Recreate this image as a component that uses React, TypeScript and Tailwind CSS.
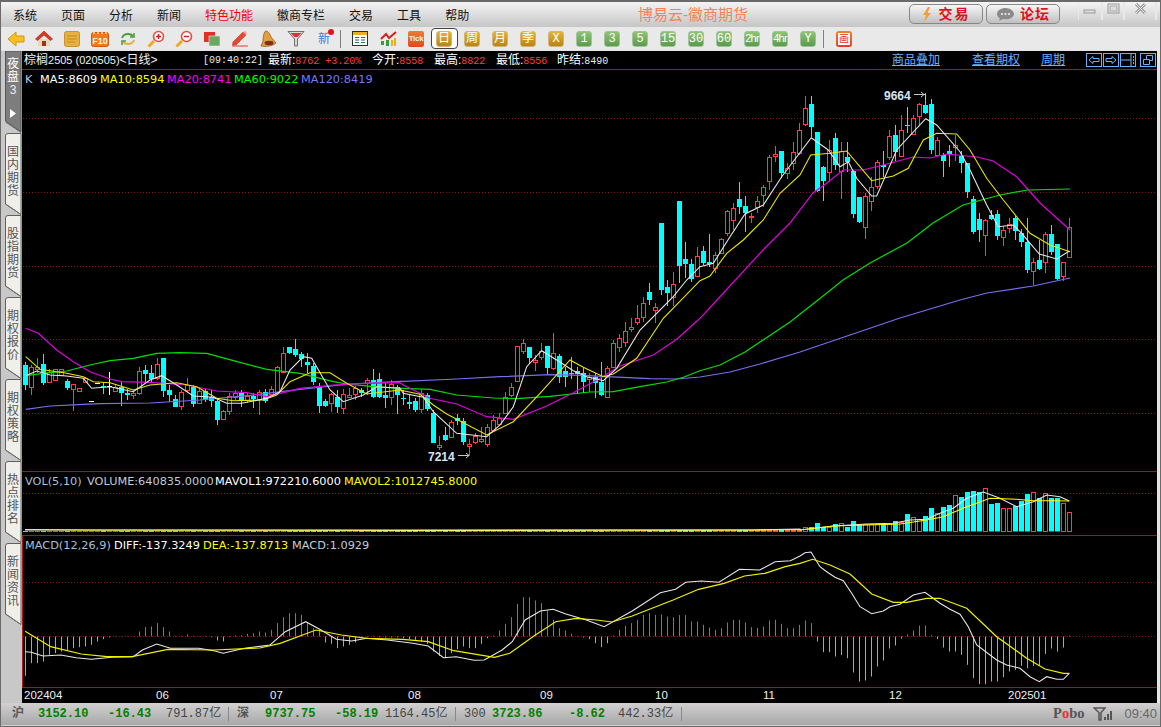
import React from "react";

type Row = [number, number, number, number, string];

const X = (i: number) => 25.5 + 6 * i;
const pts = (x0: number, y0: number, sx: number, arr: number[][]) =>
  arr.map(([x, y]) => [x0 + x / sx, y0 + y / 3]);
const str = (arr: number[][]) => arr.map(([x, y]) => `${x.toFixed(1)},${y.toFixed(1)}`).join(" ");

// candles read off the chart: body top, body bottom, wick top, wick bottom, kind
const rowsA: Row[] = [
  [165, 225, 155, 240, "c"], [172, 230, 165, 255, "r"], [170, 176, 145, 190, "r"], [162, 220, 132, 225, "c"],
  [185, 215, 178, 218, "r"], [178, 210, 178, 212, "r"], [178, 195, 178, 195, "r"], [212, 235, 208, 240, "c"],
  [222, 238, 222, 302, "r"], [234, 244, 234, 244, "r"], [203, 215, 200, 218, "r"], [272, 274, 272, 274, "w"],
  [218, 220, 218, 220, "w"], [228, 231, 215, 252, "c"], [229, 231, 185, 255, "w"], [232, 242, 225, 245, "r"],
  [232, 248, 215, 288, "c"], [248, 254, 238, 270, "c"], [250, 255, 240, 268, "r"], [183, 250, 170, 255, "r"],
  [180, 192, 165, 220, "c"], [190, 207, 165, 215, "c"], [162, 205, 143, 210, "r"], [144, 243, 144, 260, "c"],
  [240, 254, 225, 275, "c"], [268, 290, 255, 292, "c"], [247, 288, 240, 300, "r"], [225, 240, 205, 245, "r"],
  [232, 281, 225, 292, "c"], [244, 280, 232, 282, "r"], [244, 270, 238, 275, "c"], [262, 272, 240, 290, "c"],
  [272, 330, 265, 345, "c"], [304, 326, 300, 328, "r"], [257, 304, 250, 316, "r"], [250, 262, 240, 270, "r"],
  [250, 272, 240, 290, "c"], [258, 270, 250, 280, "r"], [258, 268, 250, 295, "c"], [245, 268, 240, 315, "r"],
  [245, 272, 238, 280, "c"], [238, 252, 228, 262, "r"], [172, 248, 168, 250, "r"], [130, 185, 110, 188, "r"],
  [112, 130, 110, 132, "c"], [117, 135, 88, 140, "c"], [132, 148, 125, 170, "c"], [156, 165, 128, 190, "c"],
  [168, 215, 160, 225, "c"], [232, 288, 220, 310, "c"], [274, 288, 268, 292, "c"], [253, 278, 248, 305, "r"],
  [262, 292, 240, 308, "c"], [253, 293, 238, 312, "r"], [256, 262, 235, 265, "r"], [235, 252, 228, 270, "r"],
  [240, 248, 235, 260, "c"], [210, 218, 205, 255, "r"], [210, 260, 178, 265, "c"], [208, 262, 190, 265, "c"],
  [255, 263, 218, 295, "c"], [222, 262, 210, 285, "r"], [230, 255, 225, 312, "c"],
];
const rowsB: Row[] = [
  [353, 358, 330, 375, "c"], [366, 371, 345, 388, "c"], [364, 390, 355, 395, "c"], [340, 388, 330, 400, "r"],
  [345, 388, 340, 392, "c"], [400, 488, 390, 490, "c"], [496, 502, 468, 510, "r"], [465, 480, 440, 482, "c"],
  [427, 470, 420, 472, "r"], [415, 423, 403, 435, "c"], [424, 485, 415, 495, "c"], [492, 497, 478, 528, "r"],
  [468, 485, 460, 492, "r"], [478, 482, 440, 488, "r"], [442, 492, 432, 500, "r"], [421, 450, 405, 452, "r"],
  [413, 433, 400, 435, "r"], [352, 400, 335, 402, "r"], [322, 345, 310, 350, "r"], [199, 302, 197, 305, "r"],
  [190, 212, 178, 222, "r"], [202, 233, 200, 252, "c"], [240, 246, 225, 272, "r"], [212, 232, 190, 240, "r"],
  [198, 265, 198, 282, "c"], [220, 265, 160, 270, "r"], [228, 292, 222, 310, "c"], [274, 292, 262, 320, "c"],
  [280, 283, 232, 298, "c"], [272, 282, 262, 340, "c"], [280, 305, 265, 340, "c"], [290, 298, 280, 335, "r"],
  [290, 310, 280, 355, "c"], [305, 345, 247, 348, "c"], [265, 350, 258, 350, "r"], [190, 262, 180, 265, "r"],
  [175, 202, 162, 215, "r"], [152, 185, 125, 200, "r"], [142, 148, 115, 155, "r"], [115, 125, 75, 135, "r"],
  [68, 112, 50, 125, "r"], [37, 60, 10, 75, "c"], [80, 90, 70, 128, "r"],
];
const rowsC: Row[] = [
  [99, 300, 99, 315, "c"], [291, 309, 270, 348, "c"], [283, 320, 247, 348, "r"], [33, 228, 33, 278, "c"],
  [207, 221, 156, 265, "c"], [222, 268, 208, 275, "c"], [199, 257, 170, 260, "r"],
];
const rowsD: Row[] = [
  [483, 518, 468, 525, "c"], [517, 521, 432, 530, "c"], [495, 533, 485, 550, "r"], [447, 490, 445, 492, "r"],
  [364, 428, 360, 438, "r"], [355, 390, 340, 420, "r"], [327, 350, 277, 372, "c"], [349, 370, 318, 425, "c"],
  [378, 382, 368, 398, "r"], [334, 352, 318, 370, "r"], [292, 314, 285, 350, "r"], [202, 272, 195, 300, "r"],
  [193, 197, 168, 215, "r"], [183, 248, 183, 265, "c"], [235, 250, 220, 268, "r"], [187, 220, 155, 240, "r"],
  [121, 190, 100, 195, "r"], [55, 101, 18, 108, "r"], [42, 110, 18, 140, "c"], [127, 302, 127, 305, "c"],
  [232, 272, 228, 332, "c"], [180, 245, 150, 272, "r"], [145, 225, 130, 240, "c"], [182, 243, 155, 328, "r"],
  [202, 217, 155, 245, "c"], [242, 372, 240, 385, "c"], [322, 396, 320, 400, "c"], [319, 412, 308, 448, "r"],
  [292, 334, 260, 362, "r"], [217, 288, 210, 298, "r"], [224, 230, 183, 260, "c"], [139, 202, 120, 210, "r"],
  [136, 185, 105, 212, "c"], [121, 199, 75, 200, "r"], [105, 107, 50, 128, "c"], [85, 132, 75, 135, "r"],
  [43, 77, 38, 105, "r"], [45, 68, 10, 72, "c"], [42, 180, 28, 192, "c"], [151, 195, 140, 198, "r"],
  [194, 212, 190, 262, "c"], [184, 192, 165, 232, "c"], [166, 171, 135, 212, "r"], [197, 218, 183, 250, "c"],
  [220, 305, 218, 325, "c"], [328, 427, 318, 432, "c"], [387, 420, 370, 455, "c"], [391, 436, 388, 497, "r"],
  [375, 387, 360, 390, "c"], [372, 437, 360, 450, "c"], [421, 440, 408, 467, "r"], [401, 415, 385, 430, "r"],
  [385, 422, 375, 450, "c"], [430, 455, 418, 470, "c"], [456, 540, 385, 548, "c"], [515, 542, 505, 585, "r"],
  [511, 538, 450, 540, "c"], [431, 515, 425, 548, "r"], [432, 485, 405, 495, "c"], [462, 568, 462, 570, "c"],
  [517, 557, 515, 572, "r"], [412, 502, 385, 505, "r"],
];
const conv = (y0: number, rows: Row[]): Row[] =>
  rows.map(([a, b, c, d, k]) => [
    Math.round(y0 + a / 3) + 0.5,
    Math.round(y0 + b / 3) + 0.5,
    Math.round(y0 + c / 3),
    Math.round(y0 + d / 3),
    k,
  ]);
const candles: Row[] = [...conv(310, rowsA), ...conv(280, rowsB), ...conv(190, rowsC), ...conv(90, rowsD)];

const COLOR: Record<string, string> = { r: "#ff3f3f", c: "#00ffff", w: "#ffffff" };

// moving averages in page coordinates
const ma120 = [
  ...pts(0, 310, 3, [[77, 298], [150, 288], [250, 283], [300, 281], [450, 279], [600, 270], [750, 256], [900, 238], [1050, 222], [1200, 214]]),
  ...pts(400, 280, 3, [[10, 304], [170, 297], [300, 290], [450, 284], [550, 286], [620, 290], [750, 296], [830, 297], [900, 291]]),
  [730, 372], [760, 364], [800, 352], [850, 335], [900, 318], [960, 300], [987, 293], [1033, 286], [1070, 278],
];
const ma60 = [
  ...pts(0, 310, 3, [[77, 197], [130, 190], [200, 183], [270, 165], [330, 152], [400, 145], [470, 130], [540, 128], [620, 130], [700, 152], [800, 178], [900, 190], [1000, 215], [1040, 222], [1120, 230], [1200, 235]]),
  ...pts(400, 280, 3, [[10, 325], [90, 328], [170, 345], [280, 354], [350, 356], [450, 349], [570, 336], [640, 335], [720, 320], [800, 306], [850, 292], [900, 272]]),
  [720, 365], [745, 352], [790, 322], [818, 300], [843, 280], [870, 263], [907, 243], [933, 223], [963, 205], [1000, 195], [1027, 190], [1070, 189],
];
const ma20 = [
  ...pts(0, 310, 3, [[77, 55], [115, 70], [170, 120], [220, 155], [270, 185], [330, 207], [365, 215], [450, 217], [560, 225], [650, 243], [740, 248], [800, 260], [850, 248], [900, 235], [1000, 225], [1100, 220], [1200, 218]]),
  ...pts(400, 280, 3, [[10, 315], [90, 355], [170, 372], [260, 410], [340, 418], [440, 378], [520, 338], [600, 295], [660, 258], [760, 225], [830, 178], [900, 115]]),
  [717, 300], [763, 250], [790, 223], [813, 193], [827, 183], [843, 170], [863, 170], [887, 164], [913, 157], [930, 158], [947, 154], [977, 157], [993, 161], [1017, 177], [1040, 203], [1070, 230],
];
const ma10 = [
  ...pts(0, 310, 3, [[77, 140], [120, 178], [200, 190], [250, 200], [280, 215], [330, 218], [400, 240], [450, 225], [530, 218], [590, 230], [650, 265], [700, 272], [790, 270], [830, 255], [870, 215], [930, 188], [990, 188], [1040, 220], [1100, 252], [1200, 240]]),
  ...pts(400, 280, 3, [[10, 332], [60, 343], [100, 375], [140, 402], [260, 465], [340, 425], [420, 340], [510, 240], [550, 262], [610, 290], [640, 282], [710, 235], [790, 115]]),
  ...pts(700, 90, 3, [[0, 572], [30, 558], [80, 490], [130, 450], [190, 390], [240, 310], [300, 255], [332, 195], [390, 190], [440, 183], [515, 272], [580, 258], [625, 235], [670, 150], [710, 130], [770, 132], [810, 180], [860, 265], [910, 330], [990, 430], [1050, 465], [1110, 485]]),
];
const ma5 = [
  ...pts(0, 310, 3, [[77, 197], [110, 183], [150, 195], [200, 198], [250, 205], [275, 235], [330, 230], [400, 245], [450, 210], [485, 197], [530, 225], [580, 258], [640, 262], [680, 280], [725, 280], [800, 265], [840, 245], [870, 180], [910, 140], [935, 145], [990, 240], [1030, 275], [1090, 255], [1130, 230], [1200, 235]]),
  ...pts(400, 280, 3, [[10, 340], [70, 352], [100, 395], [170, 460], [260, 470], [300, 435], [340, 380], [380, 260], [425, 212], [470, 240], [520, 272], [560, 290], [610, 302], [650, 265], [720, 150], [820, 50], [860, 0]]),
  ...pts(700, 90, 3, [[0, 530], [40, 520], [90, 440], [135, 372], [190, 345], [245, 260], [334, 143], [385, 180], [420, 230], [445, 215], [470, 265], [515, 318], [530, 318], [590, 180], [677, 86], [710, 105], [780, 185], [810, 240], [860, 345], [895, 410], [940, 405], [965, 430], [1018, 492], [1070, 507], [1108, 483]]),
];

// volume bar tops, index 130 up to the last bar
const volTops: [number, string][] = [
  [172, "r"], [172, "c"], [159, "c"], [170, "c"], [170, "r"], [162, "c"], [160, "r"], [170, "c"], [153, "c"], [162, "c"],
  [163, "r"], [163, "r"], [163, "r"], [162, "c"], [162, "r"], [153, "c"], [155, "r"], [132, "c"], [142, "r"], [146, "r"],
  [138, "c"], [114, "c"], [130, "r"], [112, "c"], [105, "c"], [76, "r"], [82, "c"], [67, "c"], [63, "c"], [67, "c"],
  [55, "r"], [102, "c"], [99, "c"], [115, "r"], [115, "r"], [108, "c"], [93, "c"], [72, "c"], [65, "r"], [85, "c"],
  [70, "r"], [85, "c"], [85, "c"], [100, "r"], [127, "r"],
];
const mavol1 = [[25, 530], [400, 530.5], [750, 530], [800, 529], ...pts(800, 470, 3, [[0, 180], [100, 168], [200, 162], [280, 160], [330, 150], [380, 148], [420, 130], [460, 115], [500, 85], [550, 66], [600, 85], [650, 110], [700, 95], [740, 75], [780, 80], [808, 93]])];
const mavol2 = [[25, 529.5], [90, 530], [400, 530], [750, 530], [800, 529.5], ...pts(800, 470, 3, [[0, 180], [100, 168], [300, 162], [380, 150], [430, 140], [500, 110], [570, 85], [650, 88], [700, 92], [760, 92], [808, 93]])];

const hist = [
  -118, -80, -80, -75, -55, -50, -45, -40, -35, -32, -30, -25, -15, -8, -3, -1, -1, -1, 1, 15, 28, 30, 40, 28, 15, 2, 2, 6, 2, -1,
  -1, -2, -12, -15, -2, 3, 4, 8, 10, 15, 12, 20, 40, 58, 70, 70, 65, 40, 25, 18, -18, -22, -35, -30, -25, -18, -5, -2, 2, -2,
  -3, -3, -3, -5, -8, -10, -16, -22, -45, -58, -65, -50, -38, -30, -35, -35, -22, -5, 3, 18, 38, 58, 98, 118, 118, 108, 100, 78, 50, 25,
  18, 8, 2, -3, -8, -20, -32, -20, 3, 20, 32, 40, 50, 65, 70, 65, 66, 60, 58, 64, 64, 45, 45, 35, 27, 20, 25, 42, 50, 50,
  42, 28, 26, 30, 48, 50, 38, 25, 25, 35, 48, 40, -15, -47, -47, -60, -56, -65, -108, -135, -132, -120, -90, -72, -36, -27, -6, 6, 18, 33,
  33, 4, -8, -33, -45, -45, -55, -85, -125, -143, -143, -135, -135, -122, -105, -100, -88, -95, -88, -88, -52, -36, -45, -33, 3,
];
const diff = [
  ...pts(20, 540, 1.96, [[10, 335], [22, 337], [45, 348], [80, 345], [110, 353], [140, 358], [180, 352], [222, 350], [240, 330], [268, 312], [295, 325], [350, 325], [380, 332], [398, 340], [440, 325], [490, 315], [520, 275], [560, 245], [590, 270], [620, 298], [650, 303], [680, 295], [720, 300], [770, 310], [800, 318], [830, 353], [855, 350], [890, 361], [910, 360], [945, 330], [965, 305], [990, 240], [1020, 213], [1045, 208], [1070, 222], [1110, 240], [1145, 260], [1200, 213], [1255, 158], [1285, 148], [1305, 127], [1335, 123], [1370, 127], [1410, 88], [1450, 90], [1480, 65], [1510, 62]]),
  ...pts(800, 470, 3, [[0, 258], [15, 248], [33, 246], [60, 290], [80, 305], [105, 322], [130, 332], [155, 370], [180, 410], [215, 431], [250, 423], [270, 410], [300, 403], [340, 375], [375, 367], [420, 400], [450, 418], [480, 433], [505, 470], [530, 525], [590, 570], [620, 585], [660, 595], [690, 620], [718, 635], [740, 620], [770, 628], [790, 628], [808, 610]]),
];
const dea = [
  ...pts(20, 540, 1.96, [[10, 274], [60, 320], [120, 342], [170, 350], [220, 350], [290, 328], [380, 330], [470, 324], [510, 310], [580, 270], [630, 285], [680, 295], [750, 298], [800, 305], [850, 332], [930, 352], [960, 340], [1010, 285], [1050, 245], [1090, 235], [1130, 240], [1160, 246], [1200, 228], [1280, 180], [1330, 148], [1380, 130], [1420, 108], [1460, 100], [1500, 80]]),
  ...pts(800, 470, 3, [[0, 280], [38, 268], [90, 285], [150, 312], [215, 372], [280, 397], [320, 397], [380, 385], [420, 385], [500, 415], [590, 500], [680, 565], [735, 597], [790, 610], [808, 610]]),
];

const GridLine = ({ y }: { y: number }) => (
  <line x1="23" x2="1157" y1={y} y2={y} stroke="#8a1212" strokeDasharray="1 2" />
);

function MainChart() {
  return (
    <svg className="absolute inset-0 h-full w-full" viewBox="22 70 1135 401">
      {[118.5, 192.5, 266.5, 339.5, 413.5].map((y) => (
        <GridLine key={y} y={y} />
      ))}
      {candles.map(([t, b, wt, wb, k], i) => {
        const x = X(i);
        return (
          <g key={i} stroke={COLOR[k]} fill={k === "r" ? "#000" : COLOR[k]}>
            <line x1={x} x2={x} y1={wt} y2={wb} />
            {k === "r" ? (
              <rect x={x - 2} y={t} width={4} height={Math.max(b - t, 1)} />
            ) : (
              <rect x={x - 2.5} y={t - 0.5} width={5} height={Math.max(b - t, 1)} stroke="none" />
            )}
          </g>
        );
      })}
      <polyline points={str(ma120)} fill="none" stroke="#7a6df0" strokeWidth="1.2" />
      <polyline points={str(ma60)} fill="none" stroke="#00e000" strokeWidth="1.2" />
      <polyline points={str(ma20)} fill="none" stroke="#e000e0" strokeWidth="1.2" />
      <polyline points={str(ma10)} fill="none" stroke="#e8e800" strokeWidth="1.1" />
      <polyline points={str(ma5)} fill="none" stroke="#e8e8e8" strokeWidth="1.1" />
      <path d="M914 94.5H925.5V99M921 92l3 2.5-3 2.5" fill="none" stroke="#c8c8c8" />
      <path d="M458 455.5H469M466 453l3 2.5-3 2.5" fill="none" stroke="#c8c8c8" />
    </svg>
  );
}

function VolChart() {
  return (
    <svg className="absolute inset-0 h-full w-full" viewBox="22 472 1135 63">
      <GridLine y={493.5} />
      {candles.map((c, i) => {
        const x = X(i);
        if (i < 130) {
          const h = i > 124 ? 3 : i > 100 ? 2 : 1;
          return <rect key={i} x={x - 2.5} y={532 - h} width={5} height={h} fill={COLOR[c[4] === "w" ? "r" : c[4]]} />;
        }
        const [top, k] = volTops[i - 130];
        const y = Math.round(470 + top / 3) + 0.5;
        return k === "r" ? (
          <rect key={i} x={x - 2} y={y} width={4} height={531.5 - y} fill="#000" stroke={COLOR.r} />
        ) : (
          <rect key={i} x={x - 2.5} y={y - 0.5} width={5} height={532 - y} fill={COLOR.c} />
        );
      })}
      <polyline points={str(mavol1)} fill="none" stroke="#e8e8e8" strokeWidth="1.1" />
      <polyline points={str(mavol2)} fill="none" stroke="#ffff00" strokeWidth="1.1" />
    </svg>
  );
}

function MacdChart() {
  return (
    <svg className="absolute inset-0 h-full w-full" viewBox="22 536 1135 151">
      <line x1="22.5" x2="22.5" y1="536" y2="687" stroke="#b01818" />
      <GridLine y={582.5} />
      <GridLine y={636.5} />
      {hist.map((v, i) => (
        <line
          key={i}
          x1={X(i)}
          x2={X(i)}
          y1={636.5}
          y2={636.5 - v / 3}
          stroke={v > 0 ? "#ff4040" : "#20e0f0"}
        />
      ))}
      <polyline points={str(diff)} fill="none" stroke="#e8e8e8" strokeWidth="1.1" />
      <polyline points={str(dea)} fill="none" stroke="#f0f000" strokeWidth="1.2" />
    </svg>
  );
}

function Legend({ items, tall }: { items: [string, string, string][]; tall?: boolean }) {
  return (
    <div
      className={`relative flex items-center pl-[3px] text-[11.3px] font-['DejaVu_Sans',sans-serif] whitespace-nowrap ${
        tall ? "h-[21px]" : "h-[20px]"
      }`}
    >
      {items.map(([t, w, c]) => (
        <span key={t} className={`${w} ${c}`}>
          {t}
        </span>
      ))}
    </div>
  );
}

const AXIS: [string, number][] = [
  ["202404", 2], ["06", 134], ["07", 248], ["08", 386], ["09", 518], ["10", 633], ["11", 741], ["12", 867], ["202501", 986],
];

// small toolbar pictures
function Slot({ children }: { children: React.ReactNode }) {
  return <div className="flex h-full w-[28px] shrink-0 items-center justify-center">{children}</div>;
}

function PeriodBtn({ label, tone, tight }: { label: string; tone: "gold" | "green"; tight?: boolean }) {
  return (
    <div
      className={`flex h-[16px] w-[16px] items-center justify-center rounded-[3px] border font-['Liberation_Mono','Noto_Sans_CJK_SC',monospace] text-white ${
        tone === "gold"
          ? "border-[#d0b478] bg-gradient-to-b from-[#e4b434] to-[#b88414]"
          : "border-[#a4c09c] bg-gradient-to-b from-[#8cc474] to-[#5a9c4c]"
      } ${tight ? "font-['Liberation_Sans'] text-[11px] tracking-[-0.8px]" : "text-[12px]"}`}
    >
      {label}
    </div>
  );
}

const Icons = {
  back: (
    <svg width="18" height="16" viewBox="0 0 18 16">
      <path d="M1 8 9 1v4h8v6H9v4z" fill="#f5c020" stroke="#d09a10" />
    </svg>
  ),
  home: (
    <svg width="18" height="17" viewBox="0 0 18 17">
      <path d="M3 9v7h12V9z" fill="#e8d8b8" />
      <path d="M7 11h4v5H7z" fill="#a83018" />
      <path d="M9 1 0.5 9l2 1.5L9 5l6.5 5.5 2-1.5z" fill="#d83820" stroke="#a02010" strokeWidth=".6" />
    </svg>
  ),
  note: (
    <svg width="16" height="16" viewBox="0 0 16 16">
      <rect x=".5" y=".5" width="15" height="15" rx="2" fill="#e8b040" stroke="#c89030" />
      <path d="M3 5h10M3 8h10M3 11h8" stroke="#c88c20" />
    </svg>
  ),
  f10: (
    <svg width="18" height="16" viewBox="0 0 18 16">
      <rect x=".5" y="1.5" width="17" height="14" rx="2" fill="#f07820" stroke="#d05810" />
      <path d="M3 1v2M7 1v2M11 1v2M15 1v2" stroke="#f8e0b0" strokeWidth="1.5" />
      <text x="9" y="13" textAnchor="middle" fontSize="9" fontWeight="700" fill="#fff8e0" fontFamily="Liberation Sans">F10</text>
    </svg>
  ),
  refresh: (
    <svg width="16" height="14" viewBox="0 0 16 14" fill="none" stroke="#4c9a3a" strokeWidth="2">
      <path d="M2 6c1-3 3-4 6-4 2 0 4 1 5 2" />
      <path d="M14 8c-1 3-3 4-6 4-2 0-4-1-5-2" stroke="#e0b040" />
      <path d="M14 1v4h-4M2 13V9h4" strokeWidth="1.5" />
    </svg>
  ),
  zoomIn: (
    <svg width="18" height="18" viewBox="0 0 18 18">
      <path d="M7 11 1.5 16.5" stroke="#f0a820" strokeWidth="3" />
      <circle cx="11.5" cy="6.5" r="5" fill="#fff" stroke="#e05040" strokeWidth="1.6" />
      <path d="M9 6.5h5M11.5 4v5" stroke="#d02020" strokeWidth="1.5" />
    </svg>
  ),
  zoomOut: (
    <svg width="18" height="18" viewBox="0 0 18 18">
      <path d="M7 11 1.5 16.5" stroke="#f0a820" strokeWidth="3" />
      <circle cx="11.5" cy="6.5" r="5" fill="#fff" stroke="#e05040" strokeWidth="1.6" />
      <path d="M9 6.5h5" stroke="#d02020" strokeWidth="1.5" />
    </svg>
  ),
  squares: (
    <svg width="18" height="16" viewBox="0 0 18 16">
      <rect x="1" y="1" width="11" height="10" fill="#e03028" />
      <rect x="6" y="5" width="11" height="10" fill="#6aa860" stroke="#e8e8e8" strokeWidth=".6" />
    </svg>
  ),
  pencil: (
    <svg width="18" height="17" viewBox="0 0 18 17">
      <path d="M2 12 12 2l3 3L5 15H1.5z" fill="#e84830" stroke="#c83020" strokeWidth=".6" />
      <path d="M12 2l3 3 1-2-2-2z" fill="#f0a090" />
      <path d="M1 16h16" stroke="#d84028" />
    </svg>
  ),
  bell: (
    <svg width="17" height="18" viewBox="0 0 17 18">
      <path d="M6 1c2 0 4 3 5 6l5 6c-3 3-10 4-15 3l2-5c0-4 1-10 3-10z" fill="#e0a040" stroke="#8a4a18" strokeWidth=".7" />
      <ellipse cx="9" cy="13" rx="4.5" ry="2.2" fill="#803018" />
    </svg>
  ),
  funnel: (
    <svg width="18" height="17" viewBox="0 0 18 17">
      <path d="M1 1.5h16L10.5 9v7h-3V9z" fill="#d8d8d8" stroke="#707070" />
      <path d="M3.5 3h11l-4 4h-3z" fill="#e03038" />
    </svg>
  ),
  table: (
    <svg width="16" height="15" viewBox="0 0 16 15">
      <rect x=".5" y=".5" width="15" height="14" fill="#fff" stroke="#303030" />
      <path d="M1 2.5h14" stroke="#e8b020" strokeWidth="3" />
      <path d="M3 6.5h4M9 6.5h4" stroke="#e02020" />
      <path d="M3 9h4M9 9h4" stroke="#2050c0" />
      <path d="M3 11.5h4M9 11.5h4" stroke="#208030" />
    </svg>
  ),
  chart: (
    <svg width="17" height="16" viewBox="0 0 17 16">
      <path d="M1 14h3V10H1zM6 15h3V9H6z" fill="#3a9a40" />
      <path d="M11 15h2V9h-2zM14 15h2V7h-2z" fill="#e8b020" />
      <path d="M1 8 6 3l3 4 7-6" fill="none" stroke="#d82020" strokeWidth="2" />
    </svg>
  ),
};

const TABS: { label: string; active?: boolean }[] = [
  { label: "夜盘", active: true },
  { label: "国内期货" },
  { label: "股指期货" },
  { label: "期权报价" },
  { label: "期权策略" },
  { label: "热点排名" },
  { label: "新闻资讯" },
];

function SideTab({ label, active }: { label: string; active?: boolean }) {
  return (
    <div className="relative h-[82px] w-[21px] shrink-0">
      <svg className="absolute inset-0" width="21" height="82" viewBox="0 0 21 82">
        {active ? (
          <path d="M4.5 0V70L20 81V0z" fill="#7d7d7d" stroke="#555" />
        ) : (
          <path d="M20 0.5H7Q4.5 0.5 4.5 3V71L20 81.5V0.5z" fill="#f0efe9" stroke="#606060" />
        )}
        <path d="M4.500 71 20 81.5" stroke="#707070" fill="none" />
      </svg>
      <div
        className={`relative flex flex-col items-center gap-[1px] pl-[3px] text-[12px] leading-[12px] ${
          active ? "pt-[7px] text-white" : "pt-[13px] text-[#555]"
        }`}
      >
        {label.split("").map((ch, i) => (
          <span key={i}>{ch}</span>
        ))}
        {active && <span className="text-[12px] leading-[12px] text-[#eee]">3</span>}
        {active && (
          <svg className="mt-[12px]" width="6" height="9" viewBox="0 0 6 9">
            <path d="M0 0 6 4.5 0 9z" fill="#fff" />
          </svg>
        )}
      </div>
    </div>
  );
}

const MENU = ["系统", "页面", "分析", "新闻", "特色功能", "徽商专栏", "交易", "工具", "帮助"];

export default function App() {
  return (
    <div className="flex h-[727px] w-[1161px] flex-col overflow-hidden border border-t-2 border-[#6a6a6a] bg-[#cfcfcf] font-['Liberation_Sans','Noto_Sans_CJK_SC',sans-serif] text-[12px] text-black">
      {/* title bar with menu */}
      <div className="relative flex h-[25px] shrink-0 items-center bg-gradient-to-b from-[#f4f4f4] to-[#c6c6c6] pl-[12px] pr-[2px]">
        <div className="flex gap-[24px] pt-[2px] text-[12px]">
          {MENU.map((m) => (
            <span key={m} className={m === "特色功能" ? "text-[#f00000]" : "text-[#111]"}>
              {m}
            </span>
          ))}
        </div>
        <span className="absolute left-[637px] top-[4px] text-[15px] leading-[18px] text-[#f4825a]">博易云-徽商期货</span>
        <div className="ml-auto flex h-full items-start">
          <div className="mt-[2px] flex h-[20px] w-[74px] items-center justify-center gap-[7px] rounded-[5px] border border-[#888] bg-gradient-to-b from-[#f6f6f6] to-[#c0c0c0] text-[14px] font-bold text-[#e01020]">
            <svg width="10" height="15" viewBox="0 0 10 15">
              <path d="M6 0 1 8h3l-2 7 7-9H5.5L8 0z" fill="#f0a030" />
            </svg>
            <span className="tracking-[2px]">交易</span>
          </div>
          <div className="ml-[3px] mt-[2px] flex h-[20px] w-[74px] items-center justify-center gap-[5px] rounded-[5px] border border-[#888] bg-gradient-to-b from-[#f6f6f6] to-[#c0c0c0] text-[14px] font-bold text-[#e01020]">
            <svg width="19" height="15" viewBox="0 0 19 15">
              <path d="M9.5 1C5 1 1 3.5 1 7c0 2 1.5 3.5 3 4.5L3 14l4-2c1 .3 1.7.3 2.5.3C14 12.3 18 10 18 7s-4-6-8.5-6z" fill="#8a8a8a" />
              <circle cx="6" cy="7" r="1.1" fill="#eee" />
              <circle cx="9.5" cy="7" r="1.1" fill="#eee" />
              <circle cx="13" cy="7" r="1.1" fill="#eee" />
            </svg>
            <span className="tracking-[1px]">论坛</span>
          </div>
          <div className="ml-[18px] flex h-full w-[80px] items-start">
            <svg width="80" height="22" viewBox="0 0 80 22" fill="none">
              <path d="M0 0v18M24 0v18M46 0v18M78 0v18" stroke="#e8e8e8" strokeWidth="2" />
              <rect x="6" y="8" width="11" height="3" fill="#dcdcdc" stroke="#999" />
              <rect x="30" y="2" width="11" height="9" stroke="#999" />
              <rect x="32" y="4" width="7" height="5" fill="#dcdcdc" stroke="#aaa" />
              <path d="M58 2l9 9M67 2l-9 9" stroke="#9a9a9a" strokeWidth="3" />
              <path d="M58 2l9 9M67 2l-9 9" stroke="#e8e8e8" />
            </svg>
          </div>
        </div>
      </div>

      {/* toolbar */}
      <div className="flex h-[23px] shrink-0 items-center bg-[#e9e9e9] pl-[1px]">
        <Slot>{Icons.back}</Slot>
        <Slot>{Icons.home}</Slot>
        <Slot>{Icons.note}</Slot>
        <Slot>{Icons.f10}</Slot>
        <Slot>{Icons.refresh}</Slot>
        <Slot>{Icons.zoomIn}</Slot>
        <Slot>{Icons.zoomOut}</Slot>
        <Slot>{Icons.squares}</Slot>
        <Slot>{Icons.pencil}</Slot>
        <Slot>{Icons.bell}</Slot>
        <Slot>{Icons.funnel}</Slot>
        <Slot>
          <div className="relative text-[12px] text-[#3a80d8]">
            新
            <span className="absolute -right-[4px] top-[-1px] h-[6px] w-[6px] rounded-full bg-[#e81010]" />
          </div>
        </Slot>
        <div className="ml-[2px] h-[18px] w-[1px] shrink-0 bg-[#808080]" />
        <div className="w-[5px] shrink-0" />
        <Slot>{Icons.table}</Slot>
        <Slot>{Icons.chart}</Slot>
        <Slot>
          <div className="flex h-[16px] w-[16px] items-center justify-center rounded-[2px] bg-gradient-to-b from-[#f07838] to-[#e04820] text-[8px] font-bold tracking-[-0.3px] text-[#fff0e0]">
            Tick
          </div>
        </Slot>
        <Slot>
          <div className="flex h-[21px] w-[27px] items-center justify-center rounded-[4px] border border-[#444] bg-white">
            <PeriodBtn label="日" tone="gold" />
          </div>
        </Slot>
        {["周", "月", "季", "X"].map((t) => (
          <Slot key={t}>
            <PeriodBtn label={t} tone="gold" />
          </Slot>
        ))}
        {["1", "3", "5", "15", "30", "60"].map((t) => (
          <Slot key={t}>
            <PeriodBtn label={t} tone="green" />
          </Slot>
        ))}
        <Slot>
          <PeriodBtn label="2hr" tone="green" tight />
        </Slot>
        <Slot>
          <PeriodBtn label="4hr" tone="green" tight />
        </Slot>
        <Slot>
          <PeriodBtn label="Y" tone="green" />
        </Slot>
        <div className="ml-[1px] h-[18px] w-[1px] shrink-0 bg-[#808080]" />
        <div className="w-[6px] shrink-0" />
        <Slot>
          <div className="flex h-[16px] w-[16px] items-center justify-center rounded-[3px] bg-gradient-to-b from-[#f08030] to-[#e83820] p-[2px]">
            <div className="flex h-full w-full items-center justify-center bg-white text-[10px] leading-none text-[#e03010]">画</div>
          </div>
        </Slot>
      </div>

      {/* body */}
      <div className="flex h-[653px] shrink-0 bg-[#e4e4e4] pt-[1px]">
        <div className="flex w-[21px] shrink-0 flex-col bg-[#c8c8c8]">
          {TABS.map((t) => (
            <SideTab key={t.label} label={t.label} active={t.active} />
          ))}
        </div>
        <div className="flex w-[1135px] shrink-0 flex-col bg-black text-white">
          {/* quote line */}
          <div className="flex h-[19px] shrink-0 items-center border-b border-[#a01818] pl-[2px] whitespace-nowrap">
            <span className="w-[179px] text-[#f0f0f0]">
              棕榈<span className="text-[11px]">2505 (020505)</span>&lt;日线&gt;
            </span>
            <span className="w-[65px] font-['Liberation_Mono'] text-[10px] text-[#e8e8e8]">[09:40:22]</span>
            <span className="w-[104px]">
              最新:<span className="font-['Liberation_Mono'] text-[10px] text-[#ff3c3c]">8762 +3.20%</span>
            </span>
            <span className="w-[62px]">
              今开:<span className="font-['Liberation_Mono'] text-[10px] text-[#ff3c3c]">8558</span>
            </span>
            <span className="w-[62px]">
              最高:<span className="font-['Liberation_Mono'] text-[10px] text-[#ff3c3c]">8822</span>
            </span>
            <span className="w-[61px]">
              最低:<span className="font-['Liberation_Mono'] text-[10px] text-[#ff3c3c]">8556</span>
            </span>
            <span>
              昨结:<span className="font-['Liberation_Mono'] text-[10px] text-[#e8e8e8]">8490</span>
            </span>
            <div className="ml-auto flex items-center text-[#6ab2ff] underline">
              <span>商品叠加</span>
              <span className="ml-[32px]">查看期权</span>
              <span className="ml-[21px]">周期</span>
              <div className="ml-[21px] flex gap-[1px] no-underline">
                <svg width="16" height="14" viewBox="0 0 16 14" fill="none" stroke="#6ab2ff">
                  <rect x=".5" y=".5" width="15" height="13" />
                  <path d="M3 7l4-3.5V5.500h6v3H7v2z" />
                </svg>
                <svg width="16" height="14" viewBox="0 0 16 14" fill="none" stroke="#6ab2ff">
                  <rect x=".5" y=".5" width="15" height="13" />
                  <path d="M13 7 9 3.5V5.500H3v3h6v2z" />
                </svg>
                <svg width="16" height="14" viewBox="0 0 16 14" fill="none" stroke="#6ab2ff">
                  <rect x=".5" y=".5" width="15" height="13" />
                  <path d="M1 7h10M11 1v12M13.5 3v2M13.5 6v2M13.5 9v2" />
                </svg>
                <svg className="ml-[3px] mr-[1px]" width="16" height="14" viewBox="0 0 16 14" fill="none" stroke="#6ab2ff">
                  <rect x=".5" y=".5" width="15" height="13" />
                  <path d="M3.5 6.5h6v5h-6zM6.5 6.5v-4h6v5h-3" />
                </svg>
              </div>
            </div>
          </div>

          {/* price panel */}
          <div className="relative h-[401px] shrink-0">
            <MainChart />
            <Legend
              tall
              items={[
                ["K", "w-[15px]", "text-[#b8c8e8]"],
                ["MA5:8609", "w-[60px]", "text-white"],
                ["MA10:8594", "w-[67px]", "text-[#ffff00]"],
                ["MA20:8741", "w-[67px]", "text-[#ff00ff]"],
                ["MA60:9022", "w-[67px]", "text-[#00ff00]"],
                ["MA120:8419", "w-[80px]", "text-[#7878ff]"],
              ]}
            />
            <span className="absolute left-[862px] top-[17px] text-[12px] font-bold text-[#d8e4f4]">9664</span>
            <span className="absolute left-[406px] top-[378px] text-[12px] font-bold text-[#d8e4f4]">7214</span>
          </div>

          {/* volume panel */}
          <div className="relative h-[64px] shrink-0 border-t border-[#a01818]">
            <VolChart />
            <Legend
              items={[
                ["VOL(5,10)", "w-[62px]", "text-[#a8c0d8]"],
                ["VOLUME:640835.0000", "w-[128px]", "text-[#c0ccd8]"],
                ["MAVOL1:972210.6000", "w-[129px]", "text-white"],
                ["MAVOL2:1012745.8000", "w-[140px]", "text-[#ffff00]"],
              ]}
            />
          </div>

          {/* macd panel */}
          <div className="relative h-[152px] shrink-0 border-t border-[#a01818]">
            <MacdChart />
            <Legend
              items={[
                ["MACD(12,26,9)", "w-[89px]", "text-[#a8c0d8]"],
                ["DIFF:-137.3249", "w-[89px]", "text-white"],
                ["DEA:-137.8713", "w-[89px]", "text-[#ffff00]"],
                ["MACD:1.0929", "w-[90px]", "text-[#c0ccd8]"],
              ]}
            />
          </div>

          {/* date axis */}
          <div className="relative h-[16px] shrink-0 border-t border-[#a01818]">
            {AXIS.map(([t, x]) => (
              <span key={t} className="absolute top-0 text-[11.5px] leading-[15px] text-[#f0f0f0]" style={{ left: x }}>
                {t}
              </span>
            ))}
          </div>
        </div>
      </div>

      {/* status bar */}
      <div className="flex h-[22px] shrink-0 items-center whitespace-nowrap bg-gradient-to-b from-[#d2d0d0] to-[#a8a8a8] pl-[11px] font-['Liberation_Mono','Noto_Sans_CJK_SC',monospace] text-[12px] font-bold">
        <span className="w-[26px] text-[12px] text-[#555]">沪</span>
        <span className="w-[70px] text-[#008000]">3152.10</span>
        <span className="w-[58px] text-[#008000]">-16.43</span>
        <span className="w-[62px] font-normal text-[#444]">791.87亿</span>
        <span className="mr-[8px] h-[14px] w-[1px] bg-[#888]" />
        <span className="w-[28px] text-[#555]">深</span>
        <span className="w-[70px] text-[#008000]">9737.75</span>
        <span className="w-[50px] text-[#008000]">-58.19</span>
        <span className="w-[70px] font-normal text-[#444]">1164.45亿</span>
        <span className="mr-[8px] h-[14px] w-[1px] bg-[#888]" />
        <span className="w-[28px] font-normal text-[#444]">300</span>
        <span className="w-[77px] text-[#008000]">3723.86</span>
        <span className="w-[49px] text-[#008000]">-8.62</span>
        <span className="w-[63px] font-normal text-[#444]">442.33亿</span>
        <span className="h-[14px] w-[1px] bg-[#888]" />
        <div className="ml-auto flex items-center pr-[3px] font-['Liberation_Sans']">
          <span className="font-['Liberation_Serif'] text-[14.5px] font-bold text-[#555]">
            P<span className="text-[#e83030]">o</span>bo
          </span>
          <svg className="ml-[9px]" width="22" height="14" viewBox="0 0 22 14">
            <path d="M1 1h11L8 5.5V13H6V5.5z" fill="none" stroke="#555" strokeWidth="1.5" />
            <path d="M11 10h2v3h-2zM14 7h2v6h-2zM17 4h2v9h-2z" fill="#555" />
          </svg>
          <span className="ml-[9px] text-[13px] font-normal text-[#666]">09:40</span>
        </div>
      </div>
    </div>
  );
}
